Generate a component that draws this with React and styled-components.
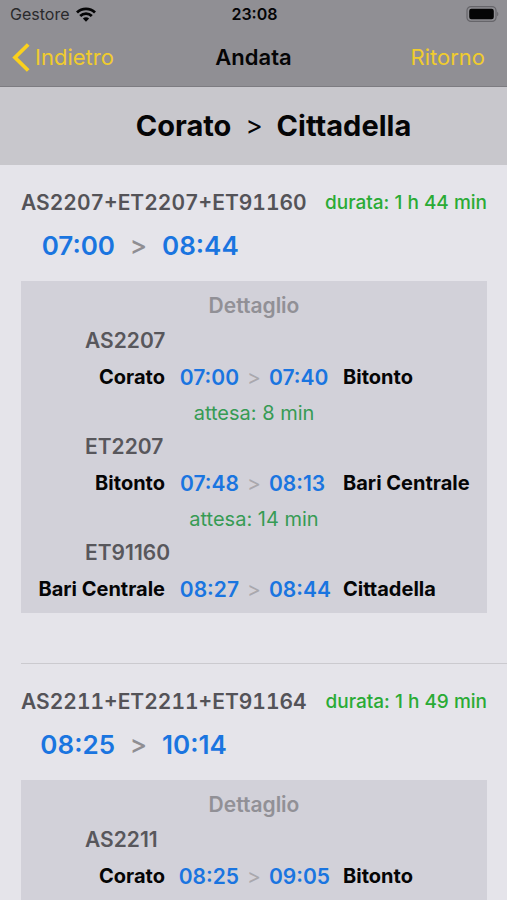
import React from "react";
import styled, { createGlobalStyle } from "styled-components";

const GlobalStyle = createGlobalStyle`
  * { box-sizing: border-box; }
  body {
    margin: 0;
    background: #e5e4ea;
    font-family: Inter, Roboto, sans-serif;
    color: #050506;
  }
`;

const Screen = styled.div`
  display: flex;
  flex-direction: column;
  height: 100vh;
`;

const Header = styled.header`
  flex: none;
  background: #908f94;
  border-bottom: 1px solid #7d7c81;
`;

const StatusBar = styled.div`
  display: grid;
  grid-template-columns: 1fr auto 1fr;
  align-items: center;
  height: 28px;
  padding: 0 8px 0 10px;
  font-size: 16px;
`;

const Carrier = styled.span`
  display: flex;
  align-items: center;
  gap: 7px;
  color: #2a2a2c;
`;

const Clock = styled.time`
  font-weight: 600;
`;

const BatterySlot = styled.span`
  display: flex;
  justify-content: flex-end;
`;

const NavBar = styled.nav`
  display: grid;
  grid-template-columns: 1fr auto 1fr;
  align-items: center;
  height: 58px;
  padding: 0 12px;
`;

const NavButton = styled.button`
  display: flex;
  align-items: center;
  gap: 5px;
  justify-self: ${(p) => p.$side};
  padding: ${(p) => (p.$side === "end" ? "0 10px" : "0")};
  border: 0;
  background: none;
  font: inherit;
  font-size: 22px;
  color: #f0cc2e;
  cursor: pointer;
`;

const NavTitle = styled.h1`
  margin: 0;
  font-size: 22px;
  font-weight: 600;
`;

const RouteBand = styled.h2`
  flex: none;
  display: flex;
  align-items: center;
  justify-content: center;
  gap: 14px;
  margin: 0;
  height: 78px;
  padding: 0 0 2px 40px;
  background: #c8c7cc;
  font-size: 29px;
  font-weight: 700;
`;

const RouteArrow = styled.span`
  font-size: 26px;
  font-weight: 400;
`;

const TripList = styled.ul`
  flex: 1;
  min-height: 0;
  margin: 0;
  padding: 0 0 0 21px;
  list-style: none;
  overflow-y: auto;
  scrollbar-width: none;
`;

const Trip = styled.li`
  padding: 22px 20px 50px 0;
  border-bottom: 1px solid #cbcacf;

  &:last-child {
    padding-bottom: 0;
    border-bottom: 0;
  }
`;

const TripHead = styled.div`
  display: flex;
  align-items: center;
  justify-content: space-between;
  height: 30px;
  white-space: nowrap;
`;

const TripCode = styled.h3`
  margin: 0;
  font-size: 21px;
  font-weight: 600;
  font-variant-numeric: tabular-nums;
  color: #545358;
`;

const Duration = styled.span`
  font-size: 19px;
  font-weight: 500;
  color: #2aab35;
`;

const TripTimes = styled.div`
  display: grid;
  grid-template-columns: 94px 47px auto;
  align-items: center;
  height: 56px;
  margin-bottom: 8px;
  font-size: 26px;
`;

const Time = styled.time`
  font-weight: 600;
  color: #1a75e0;
  text-align: ${(p) => p.$align};
`;

const Arrow = styled.span`
  text-align: center;
  font-weight: ${(p) => (p.$light ? 400 : 500)};
  color: ${(p) => (p.$light ? "#a9a8ad" : "#8f8e93")};
`;

const Detail = styled.section`
  padding: 6px 0 5px;
  background: #d2d1d9;
`;

const DetailTitle = styled.h4`
  margin: 0;
  line-height: 37px;
  font-size: 21px;
  font-weight: 600;
  text-align: center;
  color: #919096;
`;

const LegCode = styled.div`
  padding-left: 64px;
  line-height: 34px;
  font-size: 21px;
  font-weight: 600;
  color: #58575c;
`;

const LegRow = styled.div`
  display: grid;
  grid-template-columns: 1fr 74px 30px 74px 1fr;
  align-items: center;
  height: 38px;
  font-size: 21px;
`;

const Station = styled.span`
  font-size: 20px;
  font-weight: 700;
  text-align: ${(p) => p.$align};
  white-space: nowrap;
`;

const Wait = styled.div`
  line-height: 34px;
  font-size: 20px;
  text-align: center;
  color: #369b54;
`;

const trips = [
  {
    code: "AS2207+ET2207+ET91160",
    duration: "1 h 44 min",
    from: "07:00",
    to: "08:44",
    legs: [
      { code: "AS2207", start: "Corato", from: "07:00", to: "07:40", end: "Bitonto", wait: "8 min" },
      { code: "ET2207", start: "Bitonto", from: "07:48", to: "08:13", end: "Bari Centrale", wait: "14 min" },
      { code: "ET91160", start: "Bari Centrale", from: "08:27", to: "08:44", end: "Cittadella" },
    ],
  },
  {
    code: "AS2211+ET2211+ET91164",
    duration: "1 h 49 min",
    from: "08:25",
    to: "10:14",
    legs: [{ code: "AS2211", start: "Corato", from: "08:25", to: "09:05", end: "Bitonto" }],
  },
];

function WifiIcon() {
  return (
    <svg width="20" height="15" viewBox="0 0 20 15" fill="none" stroke="#050506" strokeWidth="2.8" aria-hidden="true">
      <path d="M1 5.500C6 .6 14 .6 19 5.500" />
      <path d="M4.200 9c3.300-3.200 8.300-3.200 11.600 0" />
      <path d="M6.900 11.600c1.800-1.700 4.400-1.700 6.200 0L10 14.800z" fill="#050506" stroke="none" />
    </svg>
  );
}

function BatteryIcon() {
  return (
    <svg width="33" height="16" viewBox="0 0 33 16" aria-hidden="true">
      <rect x="1" y="0.600" width="29" height="14.800" rx="4" fill="none" stroke="#66656a" strokeWidth="1.200" />
      <rect x="3.200" y="2.700" width="24.600" height="10.600" rx="2.200" fill="#050506" />
      <path d="M31.200 5.700c1.500.8 1.500 3.800 0 4.600z" fill="#66656a" />
    </svg>
  );
}

function BackIcon() {
  return (
    <svg width="18" height="29" viewBox="0 0 18 29" fill="none" stroke="#fbd11d" strokeWidth="3.800" aria-hidden="true">
      <path d="M16.200 1.500 3 14.500l13.200 13" />
    </svg>
  );
}

function Leg({ leg }) {
  return (
    <>
      <LegCode>{leg.code}</LegCode>
      <LegRow>
        <Station $align="right">{leg.start}</Station>
        <Time $align="right">{leg.from}</Time>
        <Arrow $light>&gt;</Arrow>
        <Time $align="left">{leg.to}</Time>
        <Station $align="left">{leg.end}</Station>
      </LegRow>
      {leg.wait && <Wait>attesa: {leg.wait}</Wait>}
    </>
  );
}

export default function App() {
  return (
    <Screen>
      <GlobalStyle />
      <Header>
        <StatusBar>
          <Carrier>
            Gestore
            <WifiIcon />
          </Carrier>
          <Clock>23:08</Clock>
          <BatterySlot>
            <BatteryIcon />
          </BatterySlot>
        </StatusBar>
        <NavBar>
          <NavButton type="button" $side="start">
            <BackIcon />
            Indietro
          </NavButton>
          <NavTitle>Andata</NavTitle>
          <NavButton type="button" $side="end">
            Ritorno
          </NavButton>
        </NavBar>
      </Header>
      <RouteBand>
        <span>Corato</span>
        <RouteArrow>&gt;</RouteArrow>
        <span>Cittadella</span>
      </RouteBand>
      <TripList>
        {trips.map((trip) => (
          <Trip key={trip.code}>
            <TripHead>
              <TripCode>{trip.code}</TripCode>
              <Duration>durata: {trip.duration}</Duration>
            </TripHead>
            <TripTimes>
              <Time $align="right">{trip.from}</Time>
              <Arrow>&gt;</Arrow>
              <Time $align="left">{trip.to}</Time>
            </TripTimes>
            <Detail>
              <DetailTitle>Dettaglio</DetailTitle>
              {trip.legs.map((leg) => (
                <Leg key={leg.code} leg={leg} />
              ))}
            </Detail>
          </Trip>
        ))}
      </TripList>
    </Screen>
  );
}
